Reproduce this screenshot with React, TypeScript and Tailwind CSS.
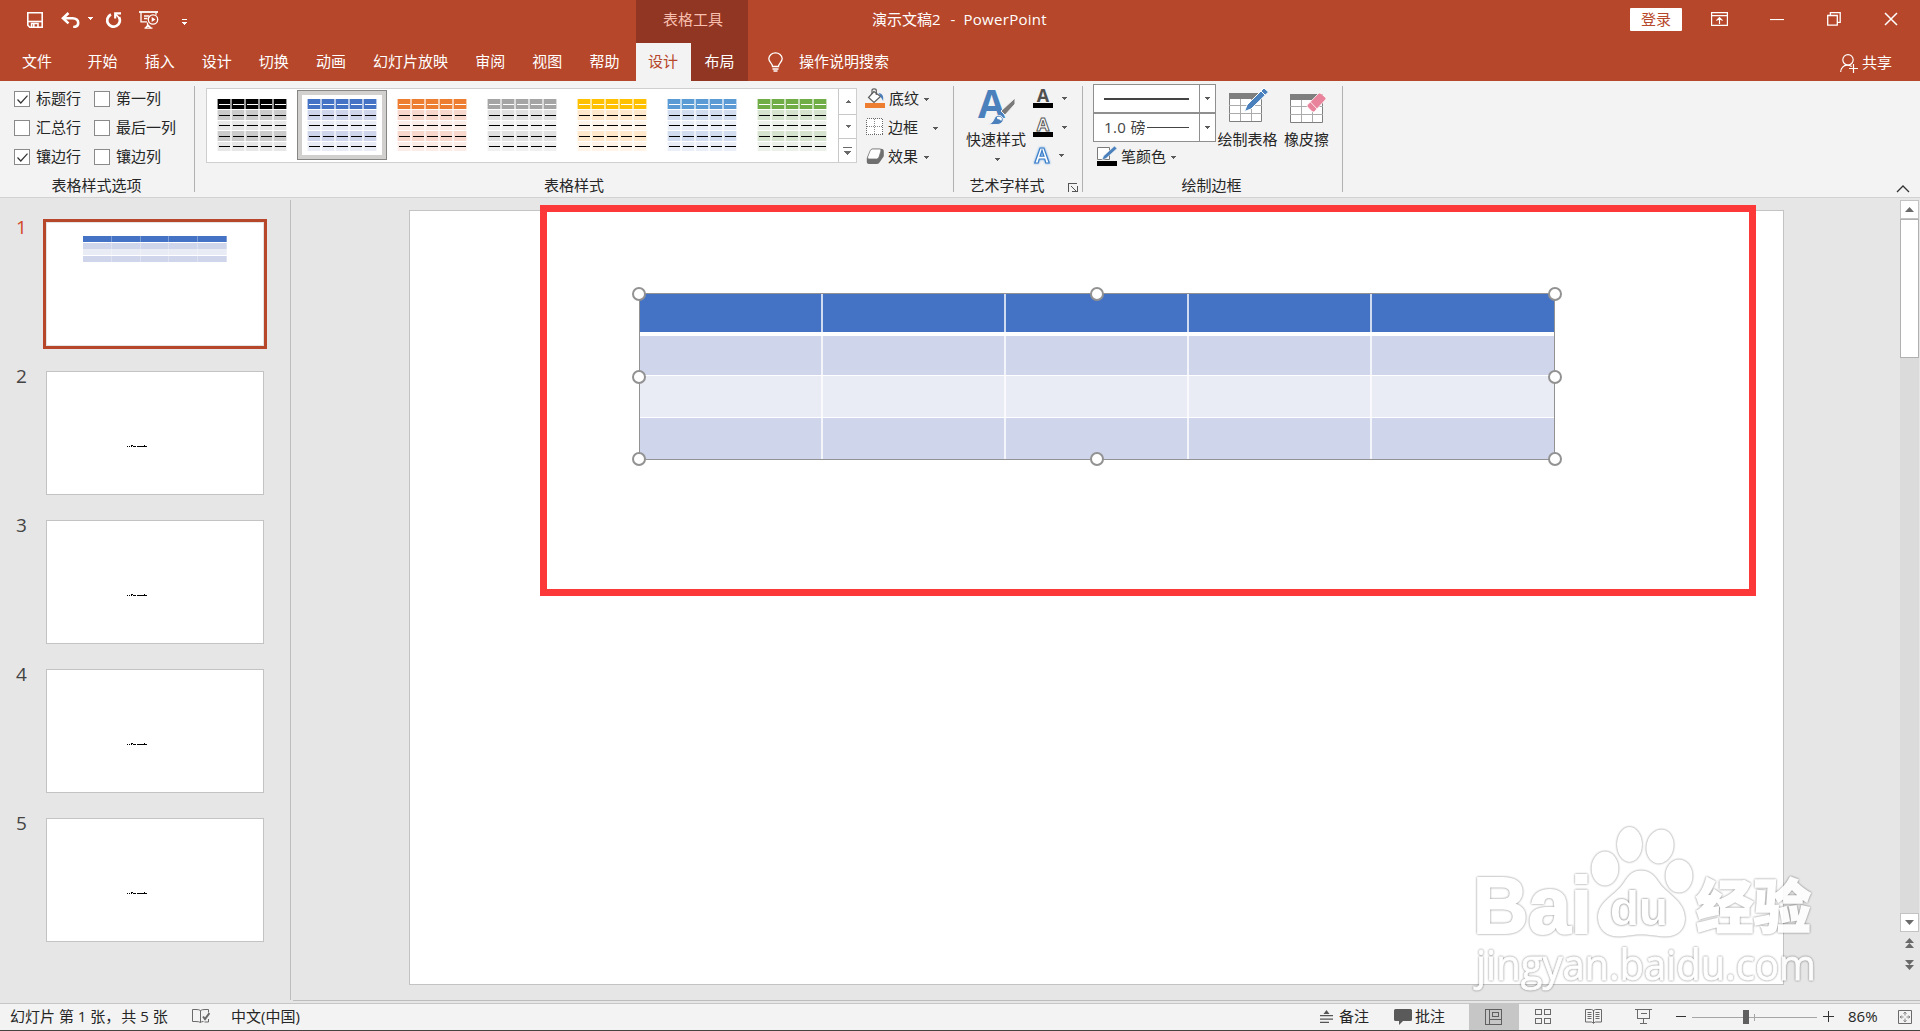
import React from "react";

const FONT =
  "font-['Open_Sans','Noto_Sans_CJK_SC',sans-serif] font-normal";

const Caret = ({ className = "" }: { className?: string }) => (
  <svg className={className} width="6" height="3" viewBox="0 0 6 3" shapeRendering="crispEdges">
    <path d="M0 0h6L3 3z" fill="currentColor" />
  </svg>
);

/* ---------- title bar ---------- */

const SaveIcon = () => (
  <svg width="16" height="16" viewBox="0 0 16 16" fill="none" stroke="#fff" strokeWidth="1.6">
    <path d="M.8.8h14.4v14.4H2.8l-2-2z" />
    <path d="M.8 9.5h14.4" />
    <path d="M4.6 15.2v-3.7h6.4v3.7M6.8 12v3" />
  </svg>
);

const UndoIcon = () => (
  <svg width="19" height="16" viewBox="0 0 19 16" fill="none" stroke="#fff">
    <path d="M2 6.2h9.500c3.600 0 5.700 2 5.700 4.500 0 2.600-2 4.300-5 4.300" strokeWidth="2.600" />
    <path d="M7.500 1 2 6.200l5.500 5.200" strokeWidth="2.600" />
  </svg>
);

const RedoIcon = () => (
  <svg width="16" height="16" viewBox="0 0 16 16" fill="none" stroke="#fff">
    <path d="M5 2.600A6.300 6.300 0 1 0 13 5.200" strokeWidth="2.700" />
    <path d="M9.200 6.500V1.400H15" strokeWidth="2.200" />
    <path d="M9.500 2l3.800 4" strokeWidth="1.800" />
  </svg>
);

const PresentIcon = () => (
  <svg width="20" height="18" viewBox="0 0 20 18" fill="none" stroke="#fff" strokeWidth="1.300">
    <path d="M0 1h19" strokeWidth="1.800" />
    <path d="M2 1.500v9.300h6M17 1.500v2.200M5 5h5M5 7.500h3.500" />
    <circle cx="14" cy="8.500" r="4.700" />
    <path d="M12.700 6v5l3.800-2.500z" fill="#fff" stroke="none" />
    <path d="M8.500 11.500v3M5.500 17.200h8M6.500 17l2.500-3 3 3" />
  </svg>
);

function TitleBar() {
  return (
    <div className="flex h-[43px] shrink-0 text-white">
      <div className="flex w-[636px] items-start">
        <div className="ml-[27px] mt-[12px]"><SaveIcon /></div>
        <div className="ml-[18px] mt-[12px]"><UndoIcon /></div>
        <Caret className="ml-[7px] mt-[17px]" />
        <div className="ml-[13px] mt-[12px]"><RedoIcon /></div>
        <div className="ml-[17px] mt-[11px]"><PresentIcon /></div>
        <svg className="ml-[23px] mt-[19px]" width="5" height="6" viewBox="0 0 5 6" shapeRendering="crispEdges">
          <path d="M0 0h5v1H0zM0 3h5L2.500 6z" fill="#fff" />
        </svg>
      </div>
      <div className="flex w-[112px] justify-center bg-[#903622] text-[15px] leading-[39px] text-[#f9bfae]">
        <span className="ml-[2px]">表格工具</span>
      </div>
      <div className="flex flex-1 items-start">
        <div className="ml-[124px] w-[757px] whitespace-pre text-[15px] leading-[39px]">
          演示文稿2<span className="ml-[10px] mr-[8px]">-</span>
          <span className="tracking-[0.3px]">PowerPoint</span>
        </div>
        <div className="ml-[1px] mt-[8px] flex h-[23px] w-[52px] items-center justify-center rounded-[1px] bg-white text-[15px] leading-[23px] text-[#b7472a]">
          登录
        </div>
        <svg className="ml-[29px] mt-[12px]" width="17" height="14" viewBox="0 0 17 14" fill="none" stroke="#fff" strokeWidth="1.200">
          <path d="M.6.6h15.800v12.800H.6zM.6 3.600h15.800M8.500 12V6M5.500 8.700l3-3 3 3" />
        </svg>
        <svg className="ml-[42px] mt-[19px]" width="14" height="2" viewBox="0 0 14 2">
          <path d="M0 .5h14" stroke="#fff" strokeWidth="1.200" />
        </svg>
        <svg className="ml-[43px] mt-[12px]" width="14" height="14" viewBox="0 0 14 14" fill="none" stroke="#fff" strokeWidth="1.300">
          <path d="M.7 3.500h9.600v9.700H.7zM3.400 3.200V.7h9.800v9.600h-2.700" />
        </svg>
        <svg className="ml-[43px] mt-[12px]" width="14" height="14" viewBox="0 0 14 14" stroke="#fff" strokeWidth="1.500">
          <path d="M1 1l12 12M13 1 1 13" />
        </svg>
      </div>
    </div>
  );
}

const TABS = ["开始", "插入", "设计", "切换", "动画", "幻灯片放映", "审阅", "视图", "帮助"];

function TabRow() {
  return (
    <div className="flex h-[38px] shrink-0 text-[15px] leading-[37px] text-white">
      <div className="flex w-[636px] pl-[22px]">
        <span className="mr-[35.500px]">文件</span>
        <div className="flex gap-[27.100px]">
          {TABS.map((t) => (
            <span key={t}>{t}</span>
          ))}
        </div>
      </div>
      <div className="w-[55px] bg-[#f3f3f3] pr-px text-center text-[#b7472a]">设计</div>
      <div className="w-[57px] bg-[#903622] text-center">布局</div>
      <svg className="ml-[20px] mt-[9px]" width="15" height="20" viewBox="0 0 15 20" fill="none" stroke="#fff" strokeWidth="1.300">
        <path d="M4.500 14.500c0-3-3.700-4.300-3.700-8A6.600 6.200 0 0 1 7.500.8a6.600 6.200 0 0 1 6.700 5.700c0 3.700-3.700 5-3.700 8z" />
        <path d="M4.500 17h6M5.500 19h4" />
      </svg>
      <span className="ml-[16px] flex-1">操作说明搜索</span>
      <svg className="mt-[11px]" width="18" height="19" viewBox="0 0 18 19" fill="none" stroke="#fff" strokeWidth="1.200">
        <circle cx="8" cy="5.800" r="5.200" />
        <path d="M.7 18c0-4 3-6.800 6.300-6.800 2 0 3.500.6 4.700 1.400M13.500 10v9M9 14.500h9" />
      </svg>
      <span className="ml-[4px] mr-[28px] leading-[39px]">共享</span>
    </div>
  );
}

/* ---------- ribbon ---------- */

const Separator = () => <div className="mt-[5px] h-[106px] w-px shrink-0 bg-[#b1b1b1]" />;

const Check = ({ on, label, w }: { on?: boolean; label: string; w: string }) => (
  <div className={`flex h-[16px] items-center ${w}`}>
    <div className="mr-[6px] flex h-[16px] w-[16px] shrink-0 items-center justify-center border border-[#8a8a8a] bg-white">
      {on && (
        <svg width="11" height="9" viewBox="0 0 11 9" fill="none" stroke="#333" strokeWidth="1.200">
          <path d="M.5 4.500 3.800 8 10.500.7" />
        </svg>
      )}
    </div>
    <span className="-mt-[2px] leading-[16px]">{label}</span>
  </div>
);

const GroupLabel = ({ children, className = "" }: { children: React.ReactNode; className?: string }) => (
  <div className={`flex h-[22px] shrink-0 justify-center leading-[20px] ${className}`}>{children}</div>
);

type Palette = { head: string; dark: string; light: string };
const STYLES: Palette[] = [
  { head: "bg-black", dark: "bg-[#cbcbcb]", light: "bg-[#e7e7e7]" },
  { head: "bg-[#4472c4]", dark: "bg-[#cfd5ea]", light: "bg-[#e9ebf5]" },
  { head: "bg-[#ed7d31]", dark: "bg-[#f8d7cd]", light: "bg-[#fcece8]" },
  { head: "bg-[#a5a5a5]", dark: "bg-[#e1e1e1]", light: "bg-[#f0f0f0]" },
  { head: "bg-[#ffc000]", dark: "bg-[#ffe8cb]", light: "bg-[#fff4e7]" },
  { head: "bg-[#5b9bd5]", dark: "bg-[#d2deef]", light: "bg-[#eaeff7]" },
  { head: "bg-[#70ad47]", dark: "bg-[#d5e3cf]", light: "bg-[#ebf1e9]" },
];

function StyleThumb({ p, selected }: { p: Palette; selected: boolean }) {
  const rows = [
    { bg: p.head, h: "h-[10px] mb-px", dash: "bg-white" },
    { bg: p.dark, h: "h-[10px] mb-px", dash: "bg-black" },
    { bg: p.light, h: "h-[9px] mb-px", dash: "bg-black" },
    { bg: p.dark, h: "h-[10px] mb-px", dash: "bg-black" },
    { bg: p.light, h: "h-[9px]", dash: "bg-black" },
  ];
  return (
    <div className={`h-[70px] w-[90px] ${selected ? "border border-[#868684] bg-[#d1d0ce] p-[4px]" : "p-[5px]"}`}>
      <div className="h-[60px] w-[80px] bg-white px-[5px] pt-[4px]">
        {rows.map((r, i) => (
          <div key={i} className={`flex ${r.h}`}>
            {[0, 1, 2, 3, 4].map((c) => (
              <div key={c} className={`flex w-[14px] items-center justify-center border-x border-white/60 ${r.bg}`}>
                <div className={`h-px w-[11px] ${r.dash}`} />
              </div>
            ))}
          </div>
        ))}
      </div>
    </div>
  );
}

function Gallery() {
  return (
    <div className="ml-[11px] mt-[7px] flex h-[75px] w-[651px] border border-[#cfcfcf] bg-white">
      <div className="flex w-[631px] pt-px">
        {STYLES.map((p, i) => (
          <StyleThumb key={i} p={p} selected={i === 1} />
        ))}
      </div>
      <div className="flex w-[18px] flex-col border-l border-[#c8c8c8] text-[#6a6a6a]">
        <div className="flex h-[26px] items-center justify-center border-b border-[#c8c8c8]">
          <Caret className="rotate-180" />
        </div>
        <div className="flex h-[24px] items-center justify-center border-b border-[#c8c8c8]">
          <Caret />
        </div>
        <div className="flex flex-1 items-center justify-center">
          <svg width="9" height="8" viewBox="0 0 9 8" shapeRendering="crispEdges">
            <path d="M0 0h9v1H0zM1 4h7L4.500 8z" fill="#6a6a6a" />
          </svg>
        </div>
      </div>
    </div>
  );
}

const BucketIcon = () => (
  <svg width="20" height="20" viewBox="0 0 20 20" fill="none">
    <path d="M9 3.500 3.500 9.500l5.500 5 6.500-6z" fill="#fff" stroke="#5f5f5f" strokeWidth="1.200" />
    <path d="M7 6V2.300C7 .3 11.300.3 11.300 2.300V7" stroke="#5f5f5f" strokeWidth="1.200" />
    <path d="M13.500 5c3 .2 4.700 2.500 4.700 4.500v3.500l-2.700-4.500z" fill="#4a7ebb" />
    <path d="M0 15h20v5H0z" fill="#ed7d31" />
  </svg>
);

const BorderIcon = () => (
  <svg width="17" height="17" viewBox="0 0 17 17" fill="none" shapeRendering="crispEdges">
    <path d="M.5.500h16v16h-16z" fill="#fff" stroke="#6a6a6a" strokeDasharray="1 1" />
    <path d="M8.500 1v15M1 8.500h15" stroke="#8a8a8a" strokeDasharray="1 1" />
  </svg>
);

const EffectIcon = () => (
  <svg width="19" height="17" viewBox="0 0 19 17">
    <path d="M6 .8h9q3 0 2.800 3v4.500L13.500 14.500q-1 1.500-3 1.500H3Q.5 16 .8 13V10z" fill="#6f6f6f" />
    <path d="M6.500 1h7q2 0 1.400 2l-1.900 6q-.6 2-2.500 2H3q-2 0-1.400-2L4 3q.6-2 2.500-2z" fill="#fff" stroke="#777" strokeWidth=".8" />
  </svg>
);

function TableStylesGroup() {
  return (
    <div className="flex w-[758px] flex-col">
      <div className="flex h-[94px]">
        <Gallery />
        <div className="ml-[8px] flex flex-col">
          <div className="mt-[7px] flex h-[22px] items-start">
            <BucketIcon />
            <span className="ml-[4px] leading-[20px]">底纹</span>
            <Caret className="ml-[4px] mt-[10px] text-[#5a5a5a]" />
          </div>
          <div className="mt-[7px] flex h-[22px] items-start pl-px">
            <div className="mt-px"><BorderIcon /></div>
            <span className="ml-[5px] leading-[20px]">边框</span>
            <Caret className="ml-[14px] mt-[10px] text-[#5a5a5a]" />
          </div>
          <div className="mt-[7px] flex h-[22px] items-start pl-px">
            <div className="mt-[2px]"><EffectIcon /></div>
            <span className="ml-[3px] leading-[20px]">效果</span>
            <Caret className="ml-[5px] mt-[10px] text-[#5a5a5a]" />
          </div>
        </div>
      </div>
      <GroupLabel>表格样式</GroupLabel>
    </div>
  );
}

const QuickStyleIcon = () => (
  <svg width="37" height="36" viewBox="0 0 37 36" className="overflow-visible">
    <text x="-1" y="28" fontSize="39" fontWeight="700" fill="#4a81bd" textLength="27" lengthAdjust="spacingAndGlyphs" fontFamily="Open Sans">A</text>
    <path d="M36 8v6L26 25l-4-4z" fill="#7a7a7a" stroke="#f3f3f3" />
    <path d="M9 34c4-.5 5-2.500 6.500-6 1.500-3.500 6.500-3.500 8.500 0 1 3.500-2 6.500-6 6.500-3 .3-6 0-9-.5z" fill="#4a81bd" stroke="#f3f3f3" />
    <path d="M18 27c0 4 3 1 4 4 2-2 1-5-4-4z" fill="#fff" />
  </svg>
);

const LetterA = ({ kind }: { kind: "fill" | "outline" | "glow" }) => (
  <svg width="20" height="20" viewBox="0 0 20 20" className="overflow-visible">
    {kind === "fill" && (
      <text x="10" y="13" textAnchor="middle" fontSize="18" fontWeight="700" fill="#4f4f4f" fontFamily="Open Sans">A</text>
    )}
    {kind === "outline" && (
      <text x="10" y="13" textAnchor="middle" fontSize="18" fontWeight="700" fill="#fff" stroke="#5a5a5a" strokeWidth="1" fontFamily="Open Sans">A</text>
    )}
    {kind === "glow" && (
      <text x="9" y="17" textAnchor="middle" fontSize="21" fontWeight="700" fill="#fff" stroke="#3d7fc9" strokeWidth="1.200" fontFamily="Open Sans" className="drop-shadow-[0_0_1px_#6aa5e5]">A</text>
    )}
    {kind !== "glow" && <path d="M0 14h20v5H0z" fill="#000" />}
  </svg>
);

function WordArtGroup() {
  return (
    <div className="flex w-[128px] flex-col">
      <div className="flex h-[94px]">
        <div className="ml-[12px] flex w-[60px] flex-col items-center">
          <div className="ml-[2px] mt-[9px] h-[37px]"><QuickStyleIcon /></div>
          <span className="mt-px whitespace-nowrap leading-[22px]">快速样式</span>
          <Caret className="ml-[2px] mt-[8px] text-[#5a5a5a]" />
        </div>
        <div className="ml-[7px] flex flex-col">
          <div className="mt-[8px] flex h-[29px]"><LetterA kind="fill" /><Caret className="ml-[8px] mt-[8px] text-[#5a5a5a]" /></div>
          <div className="flex h-[29px]"><LetterA kind="outline" /><Caret className="ml-[8px] mt-[8px] text-[#5a5a5a]" /></div>
          <div className="flex h-[29px]"><LetterA kind="glow" /><Caret className="ml-[5px] mt-[8px] text-[#5a5a5a]" /></div>
        </div>
      </div>
      <div className="flex h-[22px]">
        <GroupLabel className="ml-[15px] w-[76px]">艺术字样式</GroupLabel>
        <svg className="ml-[23px] mt-[8px]" width="10" height="9" viewBox="0 0 10 9" fill="none" stroke="#555" shapeRendering="crispEdges">
          <path d="M.5 9V.5H9M9.500 3v5.500H4" />
          <path d="M3 3l5 5" shapeRendering="auto" />
        </svg>
      </div>
    </div>
  );
}

const PenColorIcon = () => (
  <svg width="20" height="20" viewBox="0 0 20 20">
    <path d="M.5 1.500h12v12H.5z" fill="#fff" stroke="#7a7a7a" />
    <path d="M17.500 0 20 2.500 9 12.500l-4 1.500 1.500-4z" fill="#4a81bd" stroke="#f3f3f3" strokeWidth=".6" />
    <path d="M0 15h20v5H0z" />
  </svg>
);

const TableGridIcon = ({ children }: { children: React.ReactNode }) => (
  <svg width="40" height="36" viewBox="0 0 40 36">
    <path d="M.5 6.500h32v27H.5z" fill="#fff" stroke="#7f7f7f" />
    <path d="M0 5h33v6H0z" fill="#7f7f7f" />
    <path d="M0 17.500h33M0 25.500h33M11.500 11v22M22.500 11v22" stroke="#ababab" fill="none" />
    {children}
  </svg>
);

function DrawBordersGroup() {
  return (
    <div className="flex w-[259px] flex-col">
      <div className="flex h-[94px]">
        <div className="ml-[10px] mt-[3px] flex w-[123px] flex-col">
          <div className="flex h-[29px] border border-[#8f8f8f] bg-white">
            <div className="flex w-[106px] items-center border-r border-[#8f8f8f] pl-[10px]">
              <div className="h-[2px] w-[85px] bg-[#444]" />
            </div>
            <div className="flex flex-1 items-center justify-center pr-px text-[#5a5a5a]"><Caret /></div>
          </div>
          <div className="flex h-[29px] border border-[#8f8f8f] bg-white">
            <div className="flex w-[106px] items-center border-r border-[#8f8f8f] pl-[10px] text-[#444]">
              <span className="-mt-[2px] w-[43px] whitespace-pre leading-[20px] tracking-[0.4px]">1.0 磅</span>
              <div className="h-px w-[42px] bg-[#444]" />
            </div>
            <div className="flex flex-1 items-center justify-center pr-px text-[#5a5a5a]"><Caret /></div>
          </div>
          <div className="mt-[4px] flex h-[22px] items-start pl-[4px]">
            <PenColorIcon />
            <span className="ml-[4px] leading-[20px]">笔颜色</span>
            <Caret className="ml-[4px] mt-[10px] text-[#5a5a5a]" />
          </div>
        </div>
        <div className="ml-[1px] flex w-[61px] flex-col items-center">
          <div className="ml-[2px] mt-[7px] h-[40px]">
            <TableGridIcon>
              <path d="M35 0l4.500 4L22 21l-6.500 2.500L18 17z" fill="#4a81bd" stroke="#fff" />
              <path d="M32 3l4.500 4.500" stroke="#fff" />
            </TableGridIcon>
          </div>
          <span className="whitespace-nowrap leading-[22px]">绘制表格</span>
        </div>
        <div className="ml-[5px] flex w-[47px] flex-col items-center">
          <div className="ml-[6px] mt-[8px] h-[39px]">
            <TableGridIcon>
              <path d="M28.500 4.500q1.200-1 2.500 0l4.500 4q1 1 0 2.200L24.500 22.500q-1.200 1-2.500 0l-4.500-4.500q-1-1 0-2.200z" fill="#e8839b" stroke="#fff" strokeWidth=".8" />
              <path d="M20.500 13l6.500 7" stroke="#fff" strokeWidth=".8" />
            </TableGridIcon>
          </div>
          <span className="whitespace-nowrap leading-[22px]">橡皮擦</span>
        </div>
      </div>
      <GroupLabel className="pr-[2px]">绘制边框</GroupLabel>
    </div>
  );
}

function Ribbon() {
  return (
    <div className="flex h-[117px] shrink-0 border-b border-[#d2d2d2] bg-[#f3f3f3] text-[15px] text-[#262626]">
      <div className="flex w-[194px] flex-col">
        <div className="flex h-[94px] flex-col gap-[13px] pl-[14px] pt-[10px]">
          <div className="flex"><Check on w="w-[80px]" label="标题行" /><Check w="w-[90px]" label="第一列" /></div>
          <div className="flex"><Check w="w-[80px]" label="汇总行" /><Check w="w-[90px]" label="最后一列" /></div>
          <div className="flex"><Check on w="w-[80px]" label="镶边行" /><Check w="w-[90px]" label="镶边列" /></div>
        </div>
        <GroupLabel className="pr-px">表格样式选项</GroupLabel>
      </div>
      <Separator />
      <TableStylesGroup />
      <Separator />
      <WordArtGroup />
      <Separator />
      <DrawBordersGroup />
      <Separator />
      <div className="flex flex-1 items-end justify-end pb-[4px] pr-[10px]">
        <svg width="14" height="8" viewBox="0 0 14 8" fill="none" stroke="#333" strokeWidth="1.300">
          <path d="M1 7l6-6 6 6" />
        </svg>
      </div>
    </div>
  );
}

/* ---------- slide list ---------- */

function SlideList() {
  return (
    <aside className="mb-[3px] mt-[2px] flex w-[291px] shrink-0 flex-col gap-[25px] border-r border-[#bdbdbd] pt-[22px]">
      {[1, 2, 3, 4, 5].map((n) => (
        <div key={n} className="flex h-[124px]">
          <div className={`-mt-[8px] w-[46px] pl-[16px] text-[19px] leading-[26px] ${n === 1 ? "text-[#d24726]" : "text-[#444]"}`}>{n}</div>
          <div className={`w-[218px] border bg-white ${n === 1 ? "border-[#e3e3e3] ring-[3px] ring-[#b7472a]" : "border-[#c3c3c3]"}`}>
            {n === 1 ? (
              <div className="ml-[36px] mt-[13px] flex w-[144px] flex-col">
                {["h-[6px] mb-px bg-[#4472c4]", "h-[6px] bg-[#cfd5ea]", "h-[6px] mb-px bg-[#e9ebf5]", "h-[6px] bg-[#cfd5ea]"].map((c, i) => (
                  <div key={i} className={`flex ${c}`}>
                    {[0, 1, 2, 3, 4].map((k) => (
                      <div key={k} className="flex-1 border-r border-white/30" />
                    ))}
                  </div>
                ))}
              </div>
            ) : (
              <svg className="ml-[80px] mt-[73px]" width="20" height="3" viewBox="0 0 20 3" shapeRendering="crispEdges">
                <path d="M0 1h1v1H0zM2 1h1v1H2zM4 0h1v2H4zM5 0h1v1H5zM6 1h3v1H6zM10 1h10v1H10zM17 0h1v1h-1z" />
              </svg>
            )}
          </div>
        </div>
      ))}
    </aside>
  );
}

/* ---------- editing canvas ---------- */

const HANDLES = [
  "-left-[8px] -top-[7px]",
  "left-[450px] -top-[7px]",
  "left-[908px] -top-[7px]",
  "-left-[8px] top-[76px]",
  "left-[908px] top-[76px]",
  "-left-[8px] top-[158px]",
  "left-[450px] top-[158px]",
  "left-[908px] top-[158px]",
];

function SlideTable() {
  const rows = [
    "h-[38px] mb-[4px] bg-[#4472c4]",
    "h-[39px] mb-px bg-[#cfd5ea]",
    "h-[41px] mb-px bg-[#e9ebf5]",
    "h-[41px] bg-[#cfd5ea]",
  ];
  return (
    <div className="absolute left-[229px] top-[82px] w-[916px] border border-[#929292]">
      {rows.map((r, i) => (
        <div key={i} className={`flex ${r}`}>
          {[0, 1, 2, 3].map((c) => (
            <div key={c} className="w-[183px] border-r-2 border-white/75" />
          ))}
        </div>
      ))}
      {HANDLES.map((h) => (
        <div key={h} className={`absolute h-[14px] w-[14px] rounded-full border-[2.500px] border-[#929292] bg-white ${h}`} />
      ))}
    </div>
  );
}

const Watermark = () => (
  <svg className="pointer-events-none absolute left-[1177px] top-[622px] overflow-visible" width="350" height="175" viewBox="1470 820 350 175">
    <g className="drop-shadow-[0_0_1.2px_rgba(0,0,0,0.55)]" fill="#fff" stroke="#fff" strokeWidth="0" opacity=".9">
      <text x="1473" y="933" fontSize="79" fontWeight="700" fontFamily="Liberation Sans" textLength="119" lengthAdjust="spacingAndGlyphs" strokeWidth="2">Bai</text>
      <ellipse cx="1605" cy="868.500" rx="13.500" ry="17" />
      <ellipse cx="1629.500" cy="844.500" rx="12.500" ry="17.500" />
      <ellipse cx="1660" cy="846.500" rx="13.500" ry="17" transform="rotate(12 1660 846.500)" />
      <ellipse cx="1679" cy="876" rx="13.500" ry="16.500" />
      <path d="M1641 870.500c8 0 13 4 18 12 7 11 26 18 26 36 0 11-8 18-19 18-9 0-15-2-25-2-9 0-14 2-23 2-11 0-20-7-20-19 0-17 18-22 26-35 5-8 9-12 17-12z" />
      <text x="1696" y="928" fontSize="58" fontWeight="900" fontFamily="Noto Sans CJK SC" textLength="115" lengthAdjust="spacingAndGlyphs" strokeWidth="1.500">经验</text>
      <text x="1476" y="980" fontSize="42" fontWeight="500" fontFamily="Open Sans" textLength="340" lengthAdjust="spacingAndGlyphs" strokeWidth=".8">jingyan.baidu.com</text>
    </g>
    <text x="1610" y="925" fontSize="48" fontWeight="700" fontFamily="Liberation Sans" fill="#fff" textLength="58" lengthAdjust="spacingAndGlyphs" className="drop-shadow-[0_0_1.2px_rgba(0,0,0,0.6)]">du</text>
  </svg>
);

function ScrollBar() {
  return (
    <div className="mt-[2px] flex h-[732px] w-[19px] flex-col bg-[#dbdbdb] text-[#6a6a6a]">
      <div className="flex h-[19px] shrink-0 items-center justify-center border border-[#c3c3c3] bg-white">
        <svg width="9" height="5" viewBox="0 0 9 5"><path d="M0 5h9L4.500 0z" fill="currentColor" /></svg>
      </div>
      <div className="h-[139px] shrink-0 border border-[#b0b0b0] bg-white" />
      <div className="flex-1" />
      <div className="flex h-[19px] shrink-0 items-center justify-center border border-[#c3c3c3] bg-white">
        <svg width="9" height="5" viewBox="0 0 9 5"><path d="M0 0h9L4.500 5z" fill="currentColor" /></svg>
      </div>
    </div>
  );
}

function Canvas() {
  return (
    <main className="relative mb-[2px] ml-[2px] flex flex-1 border-b border-[#bdbdbd]">
      <div className="relative ml-[116px] mt-[12px] h-[775px] w-[1375px] border border-[#c3c3c3] bg-white">
        <SlideTable />
      </div>
      <div className="ml-[116px] flex flex-col items-center">
        <ScrollBar />
        <svg className="mt-[6px] -ml-px" width="9" height="10" viewBox="0 0 9 10" fill="#6a6a6a">
          <path d="M0 5h9L4.500 0zM0 10h9L4.500 5z" />
        </svg>
        <svg className="mt-[12px] -ml-px" width="9" height="10" viewBox="0 0 9 10" fill="#6a6a6a">
          <path d="M0 0h9L4.500 5zM0 5h9l-4.500 5z" />
        </svg>
      </div>
      <div className="absolute left-[247px] top-[7px] h-[391px] w-[1216px] border-[7px] border-[#fd3838]" />
      <Watermark />
    </main>
  );
}

/* ---------- status bar ---------- */

function StatusBar() {
  return (
    <div className="flex h-[28px] shrink-0 border-b border-t border-b-[#444] border-t-[#c6c6c6] bg-[#f3f3f3] text-[15px] leading-[26px] text-[#262626]">
      <span className="-mt-px ml-[10px] w-[182px] whitespace-pre">幻灯片 第 1 张，<span className="ml-[1px]">共 5 张</span></span>
      <svg className="mt-[5px]" width="18" height="15" viewBox="0 0 18 15" fill="none" stroke="#6a6a6a">
        <path d="M8.500 1.500v12M8.500 1.500Q7 .5 4 .5H.5v12H4q3 0 4.500 1 1-1 3-1M8.500 1.500Q10 .5 13 .5h3.500v3M16.500 10v3h-4" />
        <path d="M11 7.500l2 2.500 4.500-6" strokeWidth="2" />
      </svg>
      <span className="-mt-px ml-[21px] flex-1">中文(中国)</span>
      <svg className="mt-[6px]" width="13" height="13" viewBox="0 0 13 13">
        <path d="M6.500 0l3 4h-6zM0 5h13v1.300H0zM0 8.500h13v1.200H0zM0 11.800h9V13H0z" fill="#555" />
      </svg>
      <span className="-mt-px ml-[6px] w-[55px]">备注</span>
      <svg className="mt-[5px]" width="18" height="16" viewBox="0 0 18 16">
        <path d="M1.500 0h15q1.500 0 1.500 1.500v9q0 1.500-1.500 1.500H9l-4 4v-4H1.500Q0 12 0 10.500v-9Q0 0 1.500 0z" fill="#5a5a5a" />
      </svg>
      <span className="-mt-px ml-[3px] w-[54px]">批注</span>
      <div className="flex w-[50px] items-center justify-center bg-[#c6c6c6] pr-px">
        <svg width="17" height="16" viewBox="0 0 17 16" fill="none" stroke="#5f5f5f" shapeRendering="crispEdges">
          <path d="M.5.500h16v15H.5zM4.500 0v16M4.500 10.500h12M7.500 3.500h6v4h-6z" />
        </svg>
      </div>
      <svg className="ml-[16px] mt-[5px]" width="16" height="15" viewBox="0 0 16 15" fill="none" stroke="#6a6a6a" shapeRendering="crispEdges">
        <path d="M.5.500h6v5h-6zM9.500.500h6v5h-6zM.5 9.500h6v5h-6zM9.500 9.500h6v5h-6z" />
      </svg>
      <svg className="ml-[34px] mt-[5px]" width="17" height="15" viewBox="0 0 17 15" fill="none" stroke="#6a6a6a">
        <path d="M8.500 1v13.500M.5.500h6l2 1 2-1h6v12.500h-6l-2 1-2-1h-6zM2.500 3.500h4M2.500 5.500h4M2.500 7.500h4M2.500 9.500h4M10.500 3.500h4M10.500 5.500h4M10.500 7.500h4M10.500 9.500h4" />
      </svg>
      <svg className="ml-[33px] mt-[5px]" width="17" height="15" viewBox="0 0 17 15" fill="none" stroke="#6a6a6a" shapeRendering="crispEdges">
        <path d="M0 .5h17M2.500 1v8.500h12V1M5.500 4.500h6M8.500 9v5M5 14.500h7" />
      </svg>
      <div className="ml-[24px] mt-[12px] h-px w-[10px] bg-[#333]" />
      <div className="ml-[6px] flex h-[26px] items-center">
        <div className="h-px w-[51px] bg-[#a6a6a6]" />
        <div className="h-[14px] w-[6px] bg-[#5f5f5f]" />
        <div className="h-px w-[5px] bg-[#a6a6a6]" />
        <div className="h-[7px] w-px bg-[#a6a6a6]" />
        <div className="h-px w-[62px] bg-[#a6a6a6]" />
      </div>
      <svg className="ml-[6px] mt-[7px]" width="11" height="11" viewBox="0 0 11 11" stroke="#333" shapeRendering="crispEdges">
        <path d="M0 5.500h11M5.500 0v11" />
      </svg>
      <span className="-mt-px ml-[14px] w-[50px]">86%</span>
      <svg className="mr-[8px] mt-[6px]" width="14" height="14" viewBox="0 0 14 14" fill="none" stroke="#6a6a6a">
        <path d="M.5.500h13v13H.5z" />
        <path d="M7 2v3.500M7 8.500V12M2 7h3.500M8.500 7H12M5.500 3.700 7 2.200l1.500 1.500M5.500 10.300 7 11.800l1.500-1.500M3.700 5.500 2.200 7l1.500 1.500M10.300 5.500 11.800 7l-1.500 1.500" strokeWidth=".8" />
      </svg>
    </div>
  );
}

export default function App() {
  return (
    <div className={`flex h-[1031px] w-[1920px] flex-col overflow-hidden bg-[#e6e6e6] ${FONT}`}>
      <div className="flex shrink-0 flex-col bg-[#b7472a]">
        <TitleBar />
        <TabRow />
      </div>
      <Ribbon />
      <div className="flex h-[805px] shrink-0">
        <SlideList />
        <Canvas />
      </div>
      <StatusBar />
    </div>
  );
}
